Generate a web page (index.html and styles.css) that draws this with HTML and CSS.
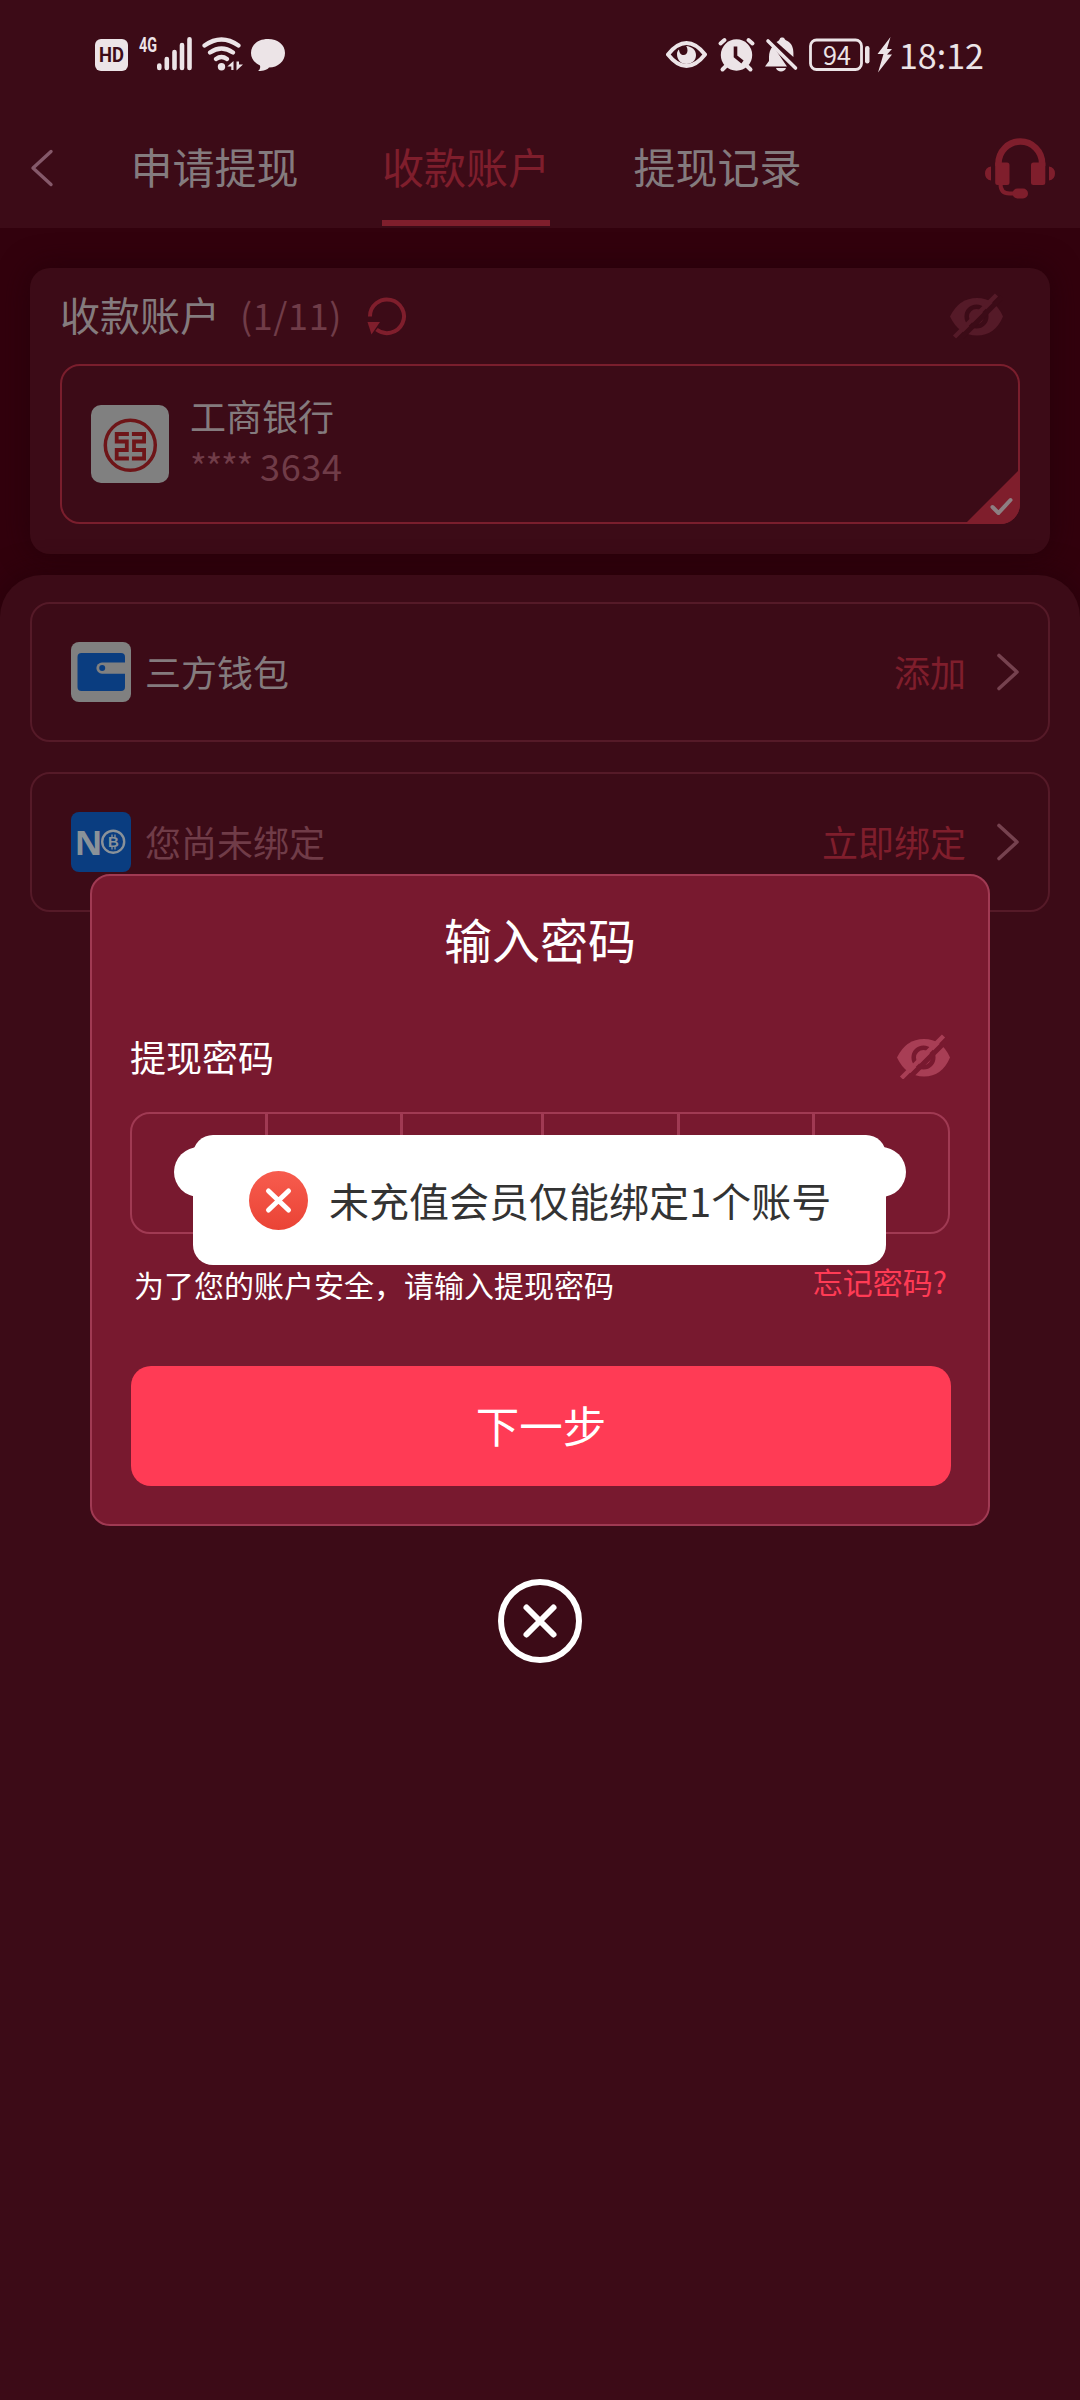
FILE: index.html
```html
<!DOCTYPE html>
<html lang="zh-CN">
<head>
<meta charset="utf-8">
<title>收款账户</title>
<link rel="stylesheet" href="styles.css">
</head>
<body>
<div class="screen">
  <header class="header">
    <div class="status">
      <svg class="status-left" width="192" height="40" viewBox="94 34 192 40" fill="#ece4e7">
        <rect x="95" y="39" width="33" height="32" rx="6"/>
        <text class="hd" x="99" y="62" textLength="25" lengthAdjust="spacingAndGlyphs">HD</text>
        <text class="net" x="139" y="51.500" textLength="18" lengthAdjust="spacingAndGlyphs">4G</text>
        <path d="M159.300 65.500v2.500M166.800 59v9M174.500 52v16M182 45v23M189.500 39.300V68" stroke="#ece4e7" stroke-width="4.600" stroke-linecap="round"/>
        <path d="M204.500 45.500q17-12 34 0M210 52.500q11.500-8 23 0M216 59q5.500-4 11 0" fill="none" stroke="#ece4e7" stroke-width="4.200" stroke-linecap="round"/>
        <circle cx="221.500" cy="66.700" r="3.700"/>
        <path d="M233.500 61v9h-2.200v-3.500h-4zM236.500 61.500v9l6.500-6h-4v-3z"/>
        <path d="M268 39c10 0 17 5.800 17 14s-7 14.500-16 14.500c-1.500 2-5 3.500-11 3.500 2-1.500 2.500-3.500 2-5.500-5.500-2.500-9-7-9-12.500 0-8.200 7-14 17-14z"/>
      </svg>
      <div class="status-right">
        <svg width="204" height="40" viewBox="666 34 204 40" fill="#ece4e7">
          <path d="M668 54.500Q677 43 686.500 43T705 54.500Q696 66 686.500 66T668 54.500z" fill="none" stroke="#ece4e7" stroke-width="4" stroke-linejoin="round"/>
          <path d="M686 46c6 .5 10 4 10 9 0 5.500-4 9-9.500 9S677 60 677 54c0-2 .8-3.500 2-4.500.5 4 2 5.500 4.500 5.500s4-2 4-4.500-1-4-1.500-4.500z"/>
          <circle cx="736.500" cy="55" r="15.700"/>
          <path d="M720.500 43.500l4-3.500M748.500 40l4 3.500M726 66l-3.500 3.500M747 66l3.500 3.500" stroke="#ece4e7" stroke-width="4" stroke-linecap="round"/>
          <path d="M735.500 46.500v10l7 5.500" fill="none" stroke="#3c0b17" stroke-width="3.600"/>
          <path d="M773 46c-3 3-4 7-4 11v4l-4 5.500h22zM776.500 42c2-1.300 3-1.800 3.500-3.500.6-1.300 3.800-1.300 4.400 0 .4 1.300 1.600 1.800 3 2.500 4.500 2.500 6 7 6 12v4zM776 68h10c-1 4.500-9 4.500-10 0z"/>
          <path d="M768 41l27.500 27" stroke="#ece4e7" stroke-width="3.600" stroke-linecap="round"/>
          <rect x="810.500" y="40" width="51" height="29.500" rx="6" fill="none" stroke="#ece4e7" stroke-width="2.800"/>
          <rect x="865" y="46" width="4.500" height="17.500" rx="2.200"/>
          <text class="bat" x="823" y="64.500" textLength="28" lengthAdjust="spacingAndGlyphs">94</text>
        </svg>
        <svg class="bolt" width="17" height="36" viewBox="876 37 17 36" fill="#ece4e7"><path d="M890.500 37L877.500 54h6l-5.500 18.500L892 54.500h-5l5-5.500h-5z"/></svg>
        <span class="time">18:12</span>
      </div>
    </div>
    <nav class="nav">
      <svg class="back" width="26" height="44" viewBox="0 0 26 44"><path d="M23 5.500L5 22 23 38.500" fill="none" stroke="#85596a" stroke-width="3.400" stroke-linecap="round" stroke-linejoin="round"/></svg>
      <div class="tabs">
        <span class="tab">申请提现</span>
        <span class="tab active">收款账户</span>
        <span class="tab">提现记录</span>
      </div>
      <svg class="headset" width="70" height="62" viewBox="0 0 70 62" fill="#7f1e2c">
        <path d="M13.500 28V25.500a21.800 22 0 0 1 43.600 0V28" fill="none" stroke="#7f1e2c" stroke-width="6.500"/>
        <path d="M10.200 24.500H22a2.500 2.500 0 0 1 2.500 2.500v17.500a2.500 2.500 0 0 1-2.500 2.500h-9.300a2.500 2.500 0 0 1-2.500-2.500zM60.300 24.500H48.500A2.500 2.500 0 0 0 46 27v17.500a2.500 2.500 0 0 0 2.500 2.500h9.300a2.500 2.500 0 0 0 2.500-2.500zM6 28.500v14Q0 41.500 0 35.500T6 28.500zM64 28.500v14q6-1 6-7T64 28.500z"/>
        <path d="M15.500 46c0 6.500 3.500 9.500 9 9.500h7" fill="none" stroke="#7f1e2c" stroke-width="4"/>
        <rect x="27.500" y="50.500" width="15.500" height="10" rx="5"/>
      </svg>
    </nav>
  </header>

  <section class="card">
    <div class="card-head">
      <span class="card-title">收款账户</span>
      <span class="count">(1/11)</span>
      <svg class="refresh" width="40" height="40" viewBox="0 0 40 40"><path d="M3 20.500a17 16.800 0 1 1 6.500 13" fill="none" stroke="#7f1e2c" stroke-width="4"/><path d="M.5 26H13L4.500 38.500z" fill="#7f1e2c"/></svg>
      <svg class="eye" width="53" height="46" viewBox="0 0 53 46"><path d="M0 23.500Q9 5 27 5T53 23.500Q45 42.500 27 42.500T0 23.500z" fill="#551a28"/><circle cx="26.500" cy="23.500" r="9.800" fill="none" stroke="#3c0b17" stroke-width="4.500"/><path d="M8 48L52 4" stroke="#3c0b17" stroke-width="5"/><path d="M4.500 44L46.500 2" stroke="#551a28" stroke-width="4.500"/></svg>
    </div>
    <div class="bank">
      <svg class="bank-logo" width="78" height="78" viewBox="0 0 78 78" fill="none" stroke="#6e1518">
        <circle cx="39.300" cy="40.300" r="25" stroke-width="3.500"/>
        <path d="M37.900 29H25.700V36.500H35.800V45H25.700V53.500H37.900M40.900 29H53.100V36.500H43V45H53.100V53.500H40.900" stroke-width="3.800"/>
      </svg>
      <div class="bank-text">
        <span class="bank-name">工商银行</span>
        <span class="bank-no"><span class="stars">****</span>3634</span>
      </div>
      <svg class="corner" width="55" height="55" viewBox="0 0 55 55"><path d="M55 0V55H0z" fill="#7f1e2c"/><path d="M27.500 38l6 6 12-13" fill="none" stroke="#8d7f82" stroke-width="4" stroke-linecap="round" stroke-linejoin="round"/></svg>
    </div>
  </section>

  <section class="sheet">
    <div class="row">
      <svg class="row-icon" width="60" height="60" viewBox="0 0 60 60"><rect width="60" height="60" rx="8" fill="#808080"/><rect x="6.500" y="11" width="47.500" height="38" rx="4" fill="#0a3d80"/><path d="M54 20.500H31a5.600 5.600 0 0 0 0 11.200H54z" fill="#808080"/><circle cx="31.200" cy="26" r="3" fill="#0a3d80"/></svg>
      <span class="row-label">三方钱包</span>
      <span class="row-action">添加</span>
      <svg class="chevron" width="24" height="40" viewBox="0 0 24 40"><path d="M3 3.500L21 20 3 36.500" fill="none" stroke="#76424f" stroke-width="3.600" stroke-linecap="round" stroke-linejoin="round"/></svg>
    </div>
    <div class="row">
      <svg class="row-icon" width="60" height="60" viewBox="0 0 60 60"><rect width="60" height="60" rx="8" fill="#0a3d80"/><text class="logo-n" x="3.500" y="42.500" textLength="28" lengthAdjust="spacingAndGlyphs">N</text><circle cx="42.200" cy="29.700" r="11" fill="none" stroke="#8a9299" stroke-width="2.400"/><text class="logo-b" x="42.300" y="35" text-anchor="middle">B</text><path d="M41 22.500v3M44 22.500v3M41 34.500v3M44 34.500v3" stroke="#8a9299" stroke-width="1.300"/></svg>
      <span class="row-label muted">您尚未绑定</span>
      <span class="row-action">立即绑定</span>
      <svg class="chevron" width="24" height="40" viewBox="0 0 24 40"><path d="M3 3.500L21 20 3 36.500" fill="none" stroke="#76424f" stroke-width="3.600" stroke-linecap="round" stroke-linejoin="round"/></svg>
    </div>
  </section>

  <div class="overlay">
    <div class="modal">
      <h1 class="modal-title">输入密码</h1>
      <div class="field-head">
        <span>提现密码</span>
        <svg width="53" height="46" viewBox="0 -1 53 46"><path d="M0 23.500Q9 5 27 5T53 23.500Q45 42.500 27 42.500T0 23.500z" fill="#a83e55"/><circle cx="26.500" cy="23.500" r="9.800" fill="none" stroke="#78192f" stroke-width="4.500"/><path d="M8 48L52 4" stroke="#78192f" stroke-width="5"/><path d="M4.500 44L46.500 2" stroke="#a83e55" stroke-width="4.500"/></svg>
      </div>
      <div class="pin"><i></i><i></i><i></i><i></i><i></i><i></i></div>
      <div class="hints">
        <span>为了您的账户安全，请输入提现密码</span>
        <a class="forgot">忘记密码?</a>
      </div>
      <div class="next">下一步</div>
      <div class="toast-back"></div>
      <div class="toast">
        <svg width="60" height="60" viewBox="0 0 60 60"><defs><linearGradient id="g" x1="0" y1="0" x2="0" y2="1"><stop offset="0" stop-color="#f75c4e"/><stop offset="1" stop-color="#ea4335"/></linearGradient></defs><circle cx="29.500" cy="30.500" r="29.500" fill="url(#g)"/><path d="M19.500 21L39.500 40M39.500 21L19.500 40" stroke="#fff" stroke-width="5" stroke-linecap="round"/></svg>
        <span>未充值会员仅能绑定1个账号</span>
      </div>
    </div>
    <svg class="close" width="84" height="84" viewBox="0 0 84 84" fill="none" stroke="#fff"><circle cx="42" cy="42" r="39" stroke-width="6"/><path d="M28.500 28.500l27 27M55.500 28.500l-27 27" stroke-width="6" stroke-linecap="round"/></svg>
  </div>
</div>
</body>
</html>
```
FILE: styles.css
```css
* { box-sizing: border-box; }
body { margin: 0; background: #32010d; }
svg { display: block; flex: none; }
.screen {
  position: relative;
  display: flex;
  flex-direction: column;
  width: 1080px;
  height: 2400px;
  overflow: hidden;
  background: #32010d;
  color: #847b7e;
  font-family: "Noto Sans CJK SC", "Noto Sans", sans-serif;
  font-size: 36px;
  line-height: 50px;
  white-space: nowrap;
}
.header { height: 228px; background: #3c0b17; }
.status { display: flex; justify-content: space-between; height: 110px; padding: 34px 95px 0 94px; }
.status-right { display: flex; color: #ece4e7; }
.bolt { margin: 3px 6px 0; }
.time { width: 86px; font-size: 34px; line-height: 41px; }
.hd { font: bold 21px Roboto, sans-serif; fill: #3c0b17; }
.net { font: bold 20px Roboto, sans-serif; }
.bat { font: 25px "Noto Sans CJK SC", sans-serif; }

.nav { display: flex; height: 118px; padding: 0 25px 2px 28px; }
.back { margin-top: 36px; }
.tabs { display: flex; gap: 83.500px; margin: 0 auto 0 76.500px; }
.tab { padding-top: 2px; border-bottom: 6px solid transparent; font-size: 42px; line-height: 108px; }
.tab.active { color: #7f1e2c; border-color: #7f1e2c; }
.headset { margin-top: 28px; }

.card {
  height: 286px;
  margin: 40px 30px 21px;
  padding: 0 30px;
  border-radius: 20px;
  background: #3c0b17;
  box-shadow: 0 0 30px #26020a;
}
.card-head { display: flex; height: 96px; padding-right: 17px; }
.card-title { font-size: 40px; line-height: 93px; }
.count { margin-left: 20px; color: #703c48; font-size: 36px; line-height: 93px; letter-spacing: .6px; }
.refresh { margin: 28px 0 0 25px; }
.card-head .eye { margin: 25px 0 0 auto; }
.bank {
  position: relative;
  display: flex;
  height: 160px;
  padding: 39px 0 0 29px;
  border: 2px solid #7a1e2d;
  border-radius: 20px;
}
.bank-logo { border-radius: 10px; background: #808080; }
.bank-text { display: flex; flex-direction: column; margin: -15px 0 0 21px; }
.bank-no { display: flex; color: #703c48; letter-spacing: .7px; }
.stars { width: 70px; letter-spacing: -1.300px; }
.corner { position: absolute; right: -2px; bottom: -2px; border-bottom-right-radius: 20px; }

.sheet {
  display: flex;
  flex: 1;
  flex-direction: column;
  gap: 30px;
  padding: 27px 30px;
  border-radius: 42px 42px 0 0;
  background: #3c0b17;
  box-shadow: 0 0 30px #26020a;
}
.row {
  display: flex;
  align-items: center;
  height: 140px;
  padding: 0 28px 0 39px;
  border: 2px solid #551a28;
  border-radius: 20px;
}
.row-label { margin: -2px 0 0 14px; }
.muted { color: #703c48; }
.row-action { margin: -2px 30px 0 auto; color: #7f1e2c; }
.logo-n { font: bold 34px "Open Sans", sans-serif; fill: #8a9299; }
.logo-b { font: bold 15px "Liberation Sans", sans-serif; fill: #8a9299; }

.overlay {
  position: absolute;
  top: 874px;
  left: 90px;
  display: flex;
  flex-direction: column;
  gap: 53px;
  width: 900px;
  color: #fff;
}
.modal {
  position: relative;
  height: 652px;
  padding: 32px 38px 0;
  border: 2px solid #a03a53;
  border-radius: 20px;
  background: #78192f;
}
.modal-title { margin: 0; font-size: 48px; font-weight: 400; line-height: 60px; text-align: center; }
.field-head { display: flex; align-items: center; justify-content: space-between; height: 52px; margin-top: 62px; }
.pin {
  display: grid;
  grid-template-columns: 136px 135px 141px 136px 135px 1fr;
  height: 122px;
  margin-top: 30px;
  border: 2px solid #a03a53;
  border-radius: 20px;
}
.pin i:not(:last-child) { border-right: 3px solid #a03a53; }
.hints { display: flex; justify-content: space-between; margin-top: 25px; padding: 0 3px 0 4px; font-size: 30px; }
.forgot { margin-top: -3px; color: #ff3b55; }
.next { height: 120px; margin: 57px -1px 0 1px; border-radius: 20px; background: #ff3b55; font-size: 43.500px; line-height: 117px; text-align: center; }
.toast-back { position: absolute; top: 271px; left: 82px; width: 732px; height: 50px; border-radius: 25px; background: #fff; }
.toast {
  position: absolute;
  top: 259px;
  left: 101px;
  display: flex;
  align-items: center;
  gap: 20px;
  width: 693px;
  height: 130px;
  padding-left: 56px;
  border-radius: 20px;
  background: #fff;
  color: #333;
  font-size: 40px;
}
.close { align-self: center; }
```
